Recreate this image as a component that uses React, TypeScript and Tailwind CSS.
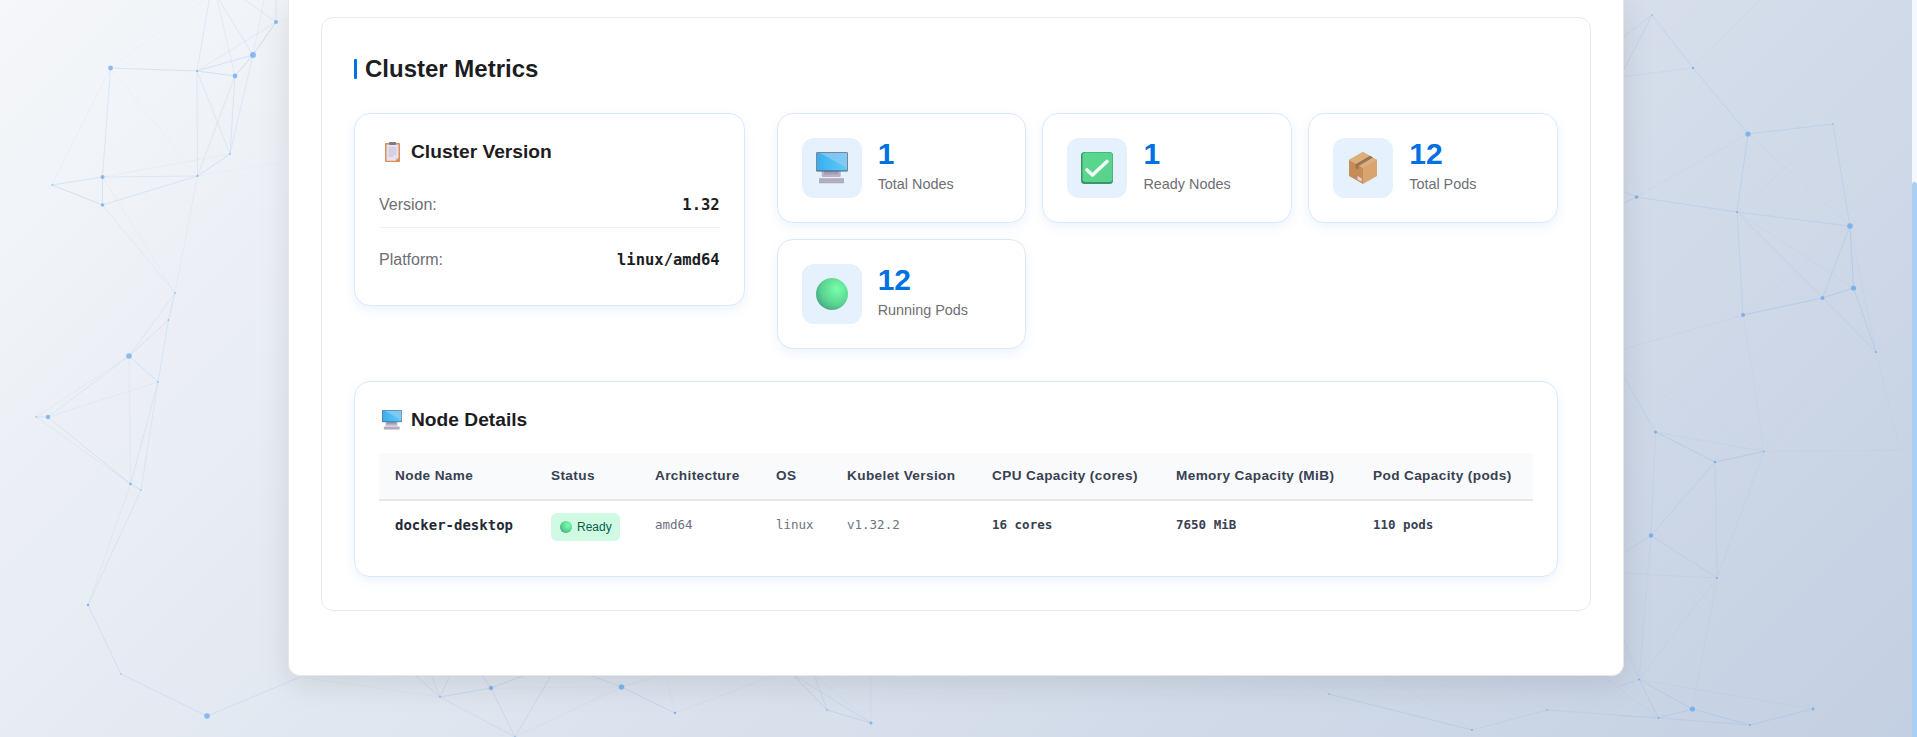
import type { ReactNode } from 'react';

// network backdrop: named points, then the links between them
const pts: Record<string, [number, number, number]> = {
  a1: [110.5, 68, 2.4], a2: [197, 71, 1], a3: [235, 76, 2.4], a4: [253, 55, 3], a5: [276, 22, 2],
  a6: [230, 154, 0.8], a7: [197.5, 176, 1], a8: [102.5, 177, 2], a9: [52, 185, 0.8], a10: [102.5, 205, 1.8],
  a11: [175, 293, 0.8], a12: [168.5, 320, 0.8], a13: [129, 356, 2.8], a14: [36, 417, 0.8], a15: [48, 417, 2.2],
  a16: [158, 382, 0.8], a17: [130.5, 484, 1.3], a18: [141, 490, 0.7], a19: [88, 605, 1.3], a20: [121, 674, 0.7],
  a21: [207, 716, 2.8],
  t0: [210, -5, 0], t1: [216, -5, 0], t2: [238, -5, 0], t3: [265, -5, 0], t4: [276, -5, 0], t5: [296, 18, 0], t6: [296, 160, 0], t7: [300, 677, 0],
  b1: [1652, 15, 0.8], b2: [1693, 68, 1.2], b3: [1748, 134, 2.6], b4: [1833, 124, 0.7], b5: [1636.5, 197, 1.8],
  b6: [1737, 212, 0.9], b7: [1850, 226, 2.8], b8: [1853.5, 288, 2.6], b9: [1822.5, 298, 2], b10: [1743, 315, 2],
  b11: [1876, 352, 1], b12: [1655.5, 432, 1.5], b13: [1715, 462, 1.3], b14: [1764, 451.5, 0.7], b15: [1651, 535.5, 2.2],
  b16: [1717, 578, 0.9], b17: [1639, 679.5, 0.8], b18: [1692.5, 709, 2.6], b19: [1658.5, 718, 0.9], b20: [1750, 725, 1],
  b21: [1813, 709, 1.4], b22: [1329, 694, 0.8], b23: [1472, 730, 0.9], b24: [1547, 710, 0.8],
  r0: [1620, 40, 0], r1: [1620, 77, 0], r2: [1760, 0, 0], r3: [1620, 350, 0], r4: [1620, 190, 0], r5: [1620, 205, 0],
  r6: [1620, 370, 0], r7: [1620, 555, 0], r8: [1620, 573, 0], r9: [1620, 686, 0], r10: [1620, 716, 0], r11: [1752, 370, 0],
  r12: [1620, 630, 0], r13: [1840, 660, 0], r14: [1900, 450, 0], r15: [1830, 370, 0],
  c1: [440, 697, 0.8], c2: [491, 688, 2.2], c3: [515, 737, 0.8], c4: [621.5, 687, 2.8], c5: [675, 713, 1.3],
  c6: [827, 710, 0.8], c7: [871, 723, 1.5],
  u1: [414, 674, 0], u2: [431, 674, 0], u3: [528, 674, 0], u4: [552, 674, 0], u5: [587, 674, 0], u6: [778, 674, 0],
  u7: [792, 674, 0], u8: [814, 674, 0], u9: [666, 674, 0], u10: [481, 674, 0], u11: [871, 674, 0], u12: [451, 674, 0],
  u13: [1300, 674, 0], u14: [1380, 674, 0], u15: [1500, 674, 0], u16: [1600, 674, 0],
};

const links: [string, string, number][] = [
  ['a1', 'a2', 0.3], ['a2', 'a3', 0.35], ['a2', 'a4', 0.3], ['a3', 'a4', 0.4], ['a4', 'a5', 0.4], ['a1', 'a8', 0.25], ['a1', 'a9', 0.08],
  ['a1', 't0', 0.05], ['a2', 't0', 0.2], ['a3', 't1', 0.15], ['a4', 't1', 0.2], ['a5', 't2', 0.2], ['a4', 't3', 0.15], ['a5', 't4', 0.2],
  ['a2', 'a5', 0.15], ['a2', 'a7', 0.2], ['a2', 'a6', 0.2], ['a3', 'a6', 0.25], ['a3', 'a7', 0.2], ['a4', 'a6', 0.2], ['a6', 'a7', 0.3],
  ['a6', 'a8', 0.1], ['a7', 'a8', 0.2], ['a8', 'a9', 0.3], ['a9', 'a10', 0.35], ['a8', 'a10', 0.3], ['a10', 'a7', 0.25], ['a1', 'a7', 0.06],
  ['a8', 'a11', 0.08], ['a10', 'a11', 0.15], ['a7', 'a11', 0.12], ['a11', 'a12', 0.3], ['a11', 'a13', 0.2], ['a12', 'a13', 0.25],
  ['a12', 'a16', 0.25], ['a13', 'a15', 0.2], ['a13', 'a14', 0.12], ['a13', 'a17', 0.12], ['a14', 'a15', 0.3], ['a15', 'a17', 0.25],
  ['a14', 'a17', 0.15], ['a15', 'a16', 0.12], ['a13', 'a16', 0.25], ['a16', 'a17', 0.2], ['a16', 'a18', 0.18], ['a17', 'a18', 0.3],
  ['a17', 'a19', 0.12], ['a18', 'a19', 0.18], ['a19', 'a20', 0.25], ['a20', 'a21', 0.22], ['a21', 't7', 0.2], ['a5', 't5', 0.06], ['a7', 't6', 0.05],
  ['b1', 'b2', 0.25], ['b2', 'b3', 0.25], ['b3', 'b4', 0.25], ['b3', 'b6', 0.25], ['b4', 'b7', 0.2], ['b6', 'b7', 0.22], ['b5', 'b6', 0.25],
  ['b7', 'b9', 0.25], ['b7', 'b8', 0.35], ['b8', 'b9', 0.35], ['b9', 'b10', 0.35], ['b8', 'b11', 0.25], ['b9', 'b11', 0.2], ['b6', 'b10', 0.2],
  ['b6', 'b9', 0.2], ['b5', 'b3', 0.1], ['b6', 'b4', 0.08], ['b3', 'b7', 0.08], ['b1', 'r0', 0.2], ['b1', 'r1', 0.2], ['b2', 'r1', 0.15],
  ['b2', 'r2', 0.08], ['b10', 'r3', 0.1], ['b5', 'r4', 0.25], ['b5', 'r5', 0.25], ['b7', 'b11', 0.08], ['b6', 'b8', 0.08], ['b10', 'b7', 0.05],
  ['b10', 'r11', 0.08], ['b12', 'r6', 0.2], ['b12', 'b13', 0.3], ['b13', 'b14', 0.3], ['b12', 'b14', 0.12], ['b12', 'b15', 0.15], ['b13', 'b15', 0.2],
  ['b13', 'b16', 0.15], ['b15', 'b16', 0.22], ['b15', 'r7', 0.2], ['b16', 'r8', 0.12], ['b17', 'b15', 0.08], ['b17', 'b16', 0.1], ['b17', 'b19', 0.25],
  ['b17', 'b18', 0.25], ['b19', 'b18', 0.3], ['b18', 'b20', 0.28], ['b19', 'b20', 0.2], ['b20', 'b21', 0.25], ['b17', 'b21', 0.08], ['b18', 'b16', 0.08],
  ['b17', 'r9', 0.15], ['b19', 'r10', 0.12], ['b14', 'b16', 0.1], ['b14', 'r11', 0.06], ['b17', 'r12', 0.12], ['b22', 'b23', 0.25], ['b23', 'b24', 0.15],
  ['b24', 'b19', 0.15], ['b14', 'r15', 0.05], ['b14', 'r14', 0.05], ['b11', 'r14', 0.05], ['b14', 'r6', 0.05],
  ['c1', 'c2', 0.3], ['c2', 'u3', 0.3], ['c1', 'c3', 0.2], ['c2', 'c3', 0.25], ['c3', 'u4', 0.25], ['c3', 'c4', 0.12], ['c4', 'c5', 0.3], ['c4', 'u5', 0.25],
  ['c5', 'u6', 0.1], ['c6', 'u7', 0.3], ['c6', 'u8', 0.2], ['c6', 'c7', 0.3], ['c7', 'u7', 0.2], ['c7', 'u11', 0.1], ['c5', 'u9', 0.1], ['c2', 'u10', 0.3],
  ['c2', 'c4', 0.08], ['c1', 'u1', 0.3], ['c1', 'u2', 0.2], ['c1', 'u12', 0.25], ['c1', 't7', 0.08], ['c7', 'u8', 0.1], ['c4', 'u9', 0.12],
  ['b22', 'u13', 0.05], ['b24', 'u15', 0.05], ['b19', 'u16', 0.1], ['b23', 'u14', 0.05],
];

function NetworkBackdrop() {
  return (
    <svg className="absolute inset-0 h-full w-full blur-[0.35px]" viewBox="0 0 1917 737" preserveAspectRatio="none">
      {links.map(([from, to, alpha]) => (
        <line
          key={from + to}
          x1={pts[from][0]}
          y1={pts[from][1]}
          x2={pts[to][0]}
          y2={pts[to][1]}
          stroke="#5a9fea"
          strokeOpacity={alpha * 0.6}
          strokeWidth={1}
        />
      ))}
      {Object.entries(pts)
        .filter(([, p]) => p[2] > 0)
        .map(([name, p]) => (
          <circle key={name} cx={p[0]} cy={p[1]} r={p[2]} fill="#5a9fea" fillOpacity={0.65} />
        ))}
    </svg>
  );
}

function MonitorIcon({ className }: { className: string }) {
  return (
    <svg className={className} viewBox="0 0 32 32">
      <defs>
        <linearGradient id="screenBlue" x1="0" y1="0" x2="1" y2="0">
          <stop offset="0" stopColor="#3aaeee" />
          <stop offset="1" stopColor="#5fcbf8" />
        </linearGradient>
      </defs>
      <rect x="5.7" y="18" width="19" height="7" rx="1.2" fill="#b9b2ca" />
      <rect x="8" y="19" width="14.5" height="3.4" fill="#a29cb5" />
      <rect x="3" y="26.3" width="25" height="5" rx="0.5" fill="#aaa6ba" />
      <path d="M3 28h25M3 29.8h25" stroke="#c6c2d2" strokeWidth="0.5" />
      <rect x="0.4" y="0.4" width="31.2" height="19" fill="#3d3a52" />
      <rect x="1" y="1" width="30" height="17.6" fill="url(#screenBlue)" />
      <path d="M4 1h27v15z" fill="#8ccbf3" fillOpacity="0.75" />
    </svg>
  );
}

function CheckIcon({ className }: { className: string }) {
  return (
    <svg className={className} viewBox="0 0 32 32">
      <defs>
        <linearGradient id="checkGreen" x1="0" y1="0" x2="1" y2="1">
          <stop offset="0" stopColor="#58d98f" />
          <stop offset="1" stopColor="#5ad08c" />
        </linearGradient>
      </defs>
      <rect x="0" y="0" width="32" height="32" rx="3.5" fill="#3c9469" />
      <rect x="1.5" y="0.5" width="30" height="29.5" rx="3" fill="url(#checkGreen)" />
      <path d="M6 18l5.5 5L26 9.5" fill="none" stroke="#f3fbf6" strokeWidth="3.6" strokeLinecap="round" strokeLinejoin="round" />
    </svg>
  );
}

function PackageIcon({ className }: { className: string }) {
  return (
    <svg className={className} viewBox="0 0 28 32">
      <path d="M14 0l14 8v16l-14 8z" fill="#d9a56f" />
      <path d="M14 0L0 8v16l14 8z" fill="#c68c58" />
      <path d="M14 0l14 8-14 8-14-8z" fill="#dcb07a" />
      <path d="M21 3.7l3 1.8L9.5 14v3.6l-3-1.7v-3.6z" fill="#9a7456" />
      <path d="M8.5 24l4.2 2.4v3.4l-4.2-2.4z" fill="#e7cfe3" />
    </svg>
  );
}

function SphereIcon({ className }: { className: string }) {
  return (
    <svg className={className} viewBox="0 0 32 32">
      <defs>
        <radialGradient id="podGreen" cx="0.65" cy="0.35" r="0.8">
          <stop offset="0" stopColor="#78ffa9" />
          <stop offset="0.6" stopColor="#5ad390" />
          <stop offset="1" stopColor="#3f9a80" />
        </radialGradient>
      </defs>
      <circle cx="16" cy="16" r="16" fill="url(#podGreen)" />
    </svg>
  );
}

function ClipboardIcon({ className }: { className: string }) {
  return (
    <svg className={className} viewBox="0 0 15 20">
      <rect x="0" y="1" width="15" height="19" rx="1" fill="#d98f55" />
      <path d="M1.5 2.5h12v13.5l-3 2.8h-9z" fill="#e8e1ef" />
      <path d="M10.5 18.8l3-2.8h-3z" fill="#cfc4d8" />
      <rect x="4" y="0" width="7" height="3" rx="0.8" fill="#7b7a8e" />
      <path d="M3.5 6h8M3.5 8h8M3.5 10h8M3.5 12h8M3.5 14h5" stroke="#b5afc4" strokeWidth="0.7" />
    </svg>
  );
}

const stats: { icon: ReactNode; value: string; label: string }[] = [
  { icon: <MonitorIcon className="h-8 w-8" />, value: '1', label: 'Total Nodes' },
  { icon: <CheckIcon className="h-8 w-8" />, value: '1', label: 'Ready Nodes' },
  { icon: <PackageIcon className="h-8 w-7" />, value: '12', label: 'Total Pods' },
  { icon: <SphereIcon className="h-8 w-8" />, value: '12', label: 'Running Pods' },
];

const columns = [
  { label: 'Node Name', width: 'w-[156px]' },
  { label: 'Status', width: 'w-[104px]' },
  { label: 'Architecture', width: 'w-[121px]' },
  { label: 'OS', width: 'w-[71px]' },
  { label: 'Kubelet Version', width: 'w-[145px]' },
  { label: 'CPU Capacity (cores)', width: 'w-[184px]' },
  { label: 'Memory Capacity (MiB)', width: 'w-[197px]' },
  { label: 'Pod Capacity (pods)', width: 'w-[176px]' },
];

const cardClass =
  'rounded-2xl border border-[#d9e9fb] bg-white shadow-[0_4px_12px_rgba(0,113,227,0.08)]';

function CardTitle({ icon, children }: { icon: ReactNode; children: ReactNode }) {
  return (
    <h3 className="flex h-7 items-center gap-[6px] text-[19.2px] leading-7 font-bold text-[#1d1d1f]">
      <span className="flex w-[26px] items-center justify-center">{icon}</span>
      {children}
    </h3>
  );
}

export default function App() {
  return (
    <div className="relative flex h-screen overflow-hidden bg-[linear-gradient(135deg,#f5f7fa_0%,#c3cfe2_100%)] font-['Liberation_Sans',Arial,sans-serif]">
      <NetworkBackdrop />

      <div className="relative flex-1">
        <main className="mx-auto h-[676px] w-[1336px] rounded-b-xl border-x border-b border-[#e5e7eb] bg-white px-8 pt-[17px] shadow-[0_8px_32px_rgba(0,0,0,0.1)]">
          <section className="rounded-xl border border-[#e9ebee] bg-white px-8 pt-8 pb-[33px]">
            <h2 className="mb-[25px] flex h-[38px] items-center gap-2 text-[24px] font-bold text-[#1d1d1f]">
              <span className="h-5 w-[3px] rounded-[1px] bg-[#0071e3]" />
              Cluster Metrics
            </h2>

            <div className="grid grid-cols-[1fr_2fr] items-start gap-8">
              {/* version card */}
              <div className={`${cardClass} px-6 pt-6 pb-[34px]`}>
                <CardTitle icon={<ClipboardIcon className="h-5 w-[15px]" />}>Cluster Version</CardTitle>
                <div className="mt-7 flex justify-between border-b border-[#f0f2f5] pb-[11px] text-[16px] leading-[22px]">
                  <span className="text-[#6e6e73]">Version:</span>
                  <span className="font-['DejaVu_Sans_Mono',monospace] text-[15.5px] font-bold text-[#1d1d1f]">1.32</span>
                </div>
                <div className="mt-[21px] flex justify-between text-[16px] leading-[22px]">
                  <span className="text-[#6e6e73]">Platform:</span>
                  <span className="font-['DejaVu_Sans_Mono',monospace] text-[15.5px] font-bold text-[#1d1d1f]">linux/amd64</span>
                </div>
              </div>

              {/* stat cards */}
              <div className="grid grid-cols-3 gap-4">
                {stats.map((stat) => (
                  <div key={stat.label} className={`${cardClass} flex items-start gap-4 p-6`}>
                    <div className="flex h-[60px] w-[60px] shrink-0 items-center justify-center rounded-xl bg-[#e5f1fc]">
                      {stat.icon}
                    </div>
                    <div className="pt-px">
                      <div className="mb-[6px] text-[30px] leading-[29px] font-bold text-[#0071e3]">{stat.value}</div>
                      <div className="text-[14.4px] leading-[21px] text-[#6e6e73]">{stat.label}</div>
                    </div>
                  </div>
                ))}
              </div>
            </div>

            {/* node table */}
            <div className={`${cardClass} mt-8 p-6`}>
              <CardTitle icon={<MonitorIcon className="h-5 w-5" />}>Node Details</CardTitle>
              <table className="mt-[19px] w-full table-fixed border-collapse">
                <thead>
                  <tr className="border-b-2 border-[#e5e7eb] bg-[#f9fafb]">
                    {columns.map((col) => (
                      <th
                        key={col.label}
                        className={`${col.width} h-[47px] px-4 text-left text-[13.6px] font-bold tracking-[0.38px] text-[#374151]`}
                      >
                        {col.label}
                      </th>
                    ))}
                  </tr>
                </thead>
                <tbody className="font-['DejaVu_Sans_Mono',monospace] text-[12.5px] leading-6">
                  <tr>
                    <td className="h-[52px] px-4 pt-3 align-top text-[14px] font-bold text-[#1f2937]">docker-desktop</td>
                    <td className="px-4 pt-3 align-top">
                      <span className="inline-flex h-7 w-[69px] items-center gap-[5px] rounded-md bg-[#d1fae5] pl-[9px] font-['Liberation_Sans',sans-serif] text-[12px] text-[#065f46]">
                        <SphereIcon className="h-3 w-3" />
                        Ready
                      </span>
                    </td>
                    <td className="px-4 pt-3 align-top text-[#6b7280]">amd64</td>
                    <td className="px-4 pt-3 align-top text-[#6b7280]">linux</td>
                    <td className="px-4 pt-3 align-top text-[#6b7280]">v1.32.2</td>
                    <td className="px-4 pt-3 align-top font-bold text-[#374151]">16 cores</td>
                    <td className="px-4 pt-3 align-top font-bold text-[#374151]">7650 MiB</td>
                    <td className="px-4 pt-3 align-top font-bold text-[#374151]">110 pods</td>
                  </tr>
                </tbody>
              </table>
            </div>
          </section>
        </main>
      </div>

      {/* scrollbar */}
      <aside className="relative flex w-[5px] flex-col bg-[#f5f9ff] pt-[182px]">
        <div className="flex-1 rounded-t-[3px] bg-[#a9cff5]" />
      </aside>
    </div>
  );
}
